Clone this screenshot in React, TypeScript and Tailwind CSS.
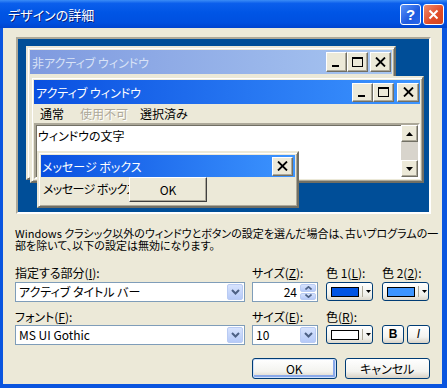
import React from "react";

// Classic 3D pieces used in the preview
const raised =
  "border border-t-white border-l-white border-r-[#716F64] border-b-[#716F64] shadow-[inset_-1px_-1px_0_#ACA899] bg-[#ECE9D8]";
const winFrame =
  "absolute flex flex-col bg-[#ECE9D8] p-[2px] border-2 border-t-[#ECE9D8] border-l-[#ECE9D8] border-r-[#716F64] border-b-[#716F64] shadow-[inset_1px_1px_0_#fff,inset_-1px_-1px_0_#ACA899]";
const activeBar = "bg-[linear-gradient(90deg,#0A50E0,#3D95FF)]";
const inactiveBar = "bg-[linear-gradient(90deg,#7F9ADF,#A8C6F1)]";

function Glyph({ kind }: { kind: "min" | "max" | "close" }) {
  if (kind === "min")
    return (
      <svg width="11" height="10" viewBox="0 0 11 10">
        <rect x="1" y="8" width="7" height="2" fill="#000" />
      </svg>
    );
  if (kind === "max")
    return (
      <svg width="11" height="10" viewBox="0 0 11 10">
        <rect x="0.5" y="0.5" width="10" height="9" fill="none" stroke="#000" />
        <rect x="0" y="0" width="11" height="2" fill="#000" />
      </svg>
    );
  return (
    <svg width="11" height="10" viewBox="0 0 11 10">
      <path d="M1 0.5 L10 9.5 M10 0.5 L1 9.5" stroke="#000" strokeWidth="1.8" />
    </svg>
  );
}

function CapBtn({ kind, className }: { kind: "min" | "max" | "close"; className: string }) {
  return (
    <div className={`flex items-center justify-center ${raised} ${className}`}>
      <Glyph kind={kind} />
    </div>
  );
}

function Chevron() {
  return (
    <svg width="9" height="6" viewBox="0 0 9 6">
      <path d="M1 1 L4.5 4.5 L8 1" stroke="#4D6185" strokeWidth="2" fill="none" />
    </svg>
  );
}

function ArrowBtn() {
  return (
    <div className="my-[1px] mr-[1px] w-[16px] flex items-center justify-center rounded-[2px] border border-[#B9CBF3] bg-[linear-gradient(180deg,#D7E3FD,#B6CAF8)]">
      <Chevron />
    </div>
  );
}

function Combo({ value, className }: { value: string; className: string }) {
  return (
    <div className={`flex h-[20px] border border-[#7F9DB9] bg-white ${className}`}>
      <span className="flex-1 pl-[3px] leading-[18px] whitespace-nowrap">{value}</span>
      <ArrowBtn />
    </div>
  );
}

function ColorBtn({ swatch }: { swatch: string }) {
  return (
    <div className="w-[47px] h-[19px] flex items-center rounded-[3px] border border-[#003C74] bg-[linear-gradient(180deg,#FFFFFF,#F0F0EA_70%,#DCD7CB)] pl-[4px]">
      <div className={`w-[28px] h-[10px] border border-black ${swatch}`} />
      <div className="ml-[3px] w-px h-[11px] bg-[#ACA899]" />
      <svg className="ml-[3px]" width="5" height="3" viewBox="0 0 5 3">
        <path d="M0 0 H5 L2.5 3 Z" fill="#000" />
      </svg>
    </div>
  );
}

function XpBtn({ children, className }: { children: React.ReactNode; className: string }) {
  return (
    <div
      className={`flex items-center justify-center rounded-[3px] border border-[#003C74] bg-[linear-gradient(180deg,#FFFFFF,#F3F3EF_65%,#D8D2C6)] ${className}`}
    >
      {children}
    </div>
  );
}

function U({ c }: { c: string }) {
  return <span className="underline underline-offset-[1px]">{c}</span>;
}

export default function App() {
  return (
    <div className="w-[447px] h-[388px] flex flex-col bg-[#0A55DF] text-[12px] leading-[13px] text-black font-['Noto_Sans_CJK_JP',sans-serif] [font-feature-settings:'palt']">
      {/* Title bar */}
      <div className="h-[28px] flex items-center pl-[8px] pr-[3px] bg-[linear-gradient(180deg,#3B8CF6_0%,#0B5FEC_12%,#0055E5_45%,#0050E0_80%,#0044CF_100%)]">
        <span className="text-white text-[13px] [text-shadow:1px_1px_0_#0A1E7A]">デザインの詳細</span>
        <div className="ml-auto flex gap-[2px]">
          <div className="w-[21px] h-[21px] flex items-center justify-center rounded-[3px] border border-white bg-[linear-gradient(135deg,#5A93F8,#1D5AE0_60%,#2A66EA)] text-white text-[15px] font-bold font-['Liberation_Sans',sans-serif]">
            ?
          </div>
          <div className="w-[21px] h-[21px] flex items-center justify-center rounded-[3px] border border-white bg-[linear-gradient(135deg,#F08C6E,#E04A27_60%,#D2461F)]">
            <svg width="11" height="11" viewBox="0 0 11 11">
              <path d="M1.5 1.5 L9.5 9.5 M9.5 1.5 L1.5 9.5" stroke="#fff" strokeWidth="2" />
            </svg>
          </div>
        </div>
      </div>

      {/* Client area */}
      <div className="flex-1 ml-[3px] mr-[5px] mb-[4px] bg-[#ECE9D8] px-[12px] pt-[9px] flex flex-col">
        {/* Preview */}
        <div className="relative ml-[1px] w-[415px] h-[177px] shrink-0 bg-[#004E98] border-2 border-t-[#ACA899] border-l-[#ACA899] border-r-white border-b-white">
          {/* Inactive window */}
          <div className={`${winFrame} left-[8px] top-[7px] w-[370px] h-[134px]`}>
            <div className={`h-[24px] flex items-center pl-[2px] pr-[1px] ${inactiveBar}`}>
              <span className="text-[#D8E2F6] whitespace-nowrap">非アクティブ ウィンドウ</span>
              <div className="ml-auto flex">
                <CapBtn kind="min" className="w-[21px] h-[20px]" />
                <CapBtn kind="max" className="w-[21px] h-[20px]" />
                <CapBtn kind="close" className="ml-[2px] w-[21px] h-[20px]" />
              </div>
            </div>
          </div>

          {/* Active window */}
          <div className={`${winFrame} left-[12px] top-[37px] w-[394px] h-[107px]`}>
            <div className={`h-[24px] shrink-0 flex items-center pl-[2px] pr-[1px] ${activeBar}`}>
              <span className="text-white whitespace-nowrap">アクティブ ウィンドウ</span>
              <div className="ml-auto flex">
                <CapBtn kind="min" className="w-[21px] h-[19px]" />
                <CapBtn kind="max" className="w-[21px] h-[19px]" />
                <CapBtn kind="close" className="ml-[3px] w-[22px] h-[19px]" />
              </div>
            </div>
            <div className="h-[19px] shrink-0 flex items-center pl-[6px] whitespace-nowrap">
              <span className="w-[40px]">通常</span>
              <span className="w-[60px] text-[#ACA899] [text-shadow:1px_1px_0_#fff]">使用不可</span>
              <span>選択済み</span>
            </div>
            <div className="h-[56px] shrink-0 flex bg-white border-2 border-t-[#ACA899] border-l-[#ACA899] border-r-white border-b-white shadow-[inset_1px_1px_0_#716F64]">
              <span className="flex-1 pl-[2px] pt-[4px]">ウィンドウの文字</span>
              <div className="w-[17px] flex flex-col">
                <div className={`h-[17px] flex items-center justify-center ${raised}`}>
                  <svg width="7" height="4" viewBox="0 0 7 4">
                    <path d="M0 4 H7 L3.5 0 Z" fill="#000" />
                  </svg>
                </div>
                <div className="flex-1 bg-[#D8D4CC]" />
                <div className={`h-[17px] flex items-center justify-center ${raised}`}>
                  <svg width="7" height="4" viewBox="0 0 7 4">
                    <path d="M0 0 H7 L3.5 4 Z" fill="#000" />
                  </svg>
                </div>
              </div>
            </div>
          </div>

          {/* Message box */}
          <div className={`${winFrame} left-[19px] top-[112px] w-[262px] h-[57px]`}>
            <div className={`h-[22px] shrink-0 flex items-center pl-[1px] pr-[2px] ${activeBar}`}>
              <span className="text-white whitespace-nowrap">メッセージ ボックス</span>
              <CapBtn kind="close" className="ml-auto w-[21px] h-[19px]" />
            </div>
            <div className="relative flex-1 flex pl-[2px] pt-[5px] overflow-hidden">
              <span className="w-[86px] overflow-hidden whitespace-nowrap tracking-[-0.6px]">メッセージ ボックスの文字</span>
              <div className="absolute left-[88px] top-0 w-[78px] h-[25px] flex items-center justify-center border border-t-white border-l-white border-r-[#404040] border-b-[#404040] shadow-[inset_-1px_-1px_0_#ACA899] bg-[#ECE9D8]">
                OK
              </div>
            </div>
          </div>
        </div>

        {/* Info */}
        <div className="mt-[13px] text-[11px] leading-[12px] whitespace-nowrap">
          <div>Windows クラシック以外のウィンドウとボタンの設定を選んだ場合は、古いプログラムの一</div>
          <div>部を除いて、以下の設定は無効になります。</div>
        </div>

        {/* Item row */}
        <div className="mt-[15px] flex">
          <div className="w-[230px] flex flex-col gap-[3px]">
            <span>
              指定する部分(<U c="I" />):
            </span>
            <Combo value="アクティブ タイトル バー" className="w-[230px]" />
          </div>
          <div className="ml-[7px] w-[66px] flex flex-col gap-[3px]">
            <span className="whitespace-nowrap">
              サイズ(<U c="Z" />):
            </span>
            <div className="flex h-[20px] border border-[#7F9DB9] bg-white">
              <span className="flex-1 text-right pr-[3px] leading-[18px]">24</span>
              <div className="my-[1px] mr-[1px] w-[16px] flex flex-col gap-px">
                <div className="flex-1 flex items-center justify-center rounded-[2px] border border-[#B9CBF3] bg-[linear-gradient(180deg,#D7E3FD,#B6CAF8)]">
                  <svg width="7" height="4" viewBox="0 0 7 4">
                    <path d="M0.5 3.5 L3.5 0.8 L6.5 3.5" stroke="#4D6185" strokeWidth="1.6" fill="none" />
                  </svg>
                </div>
                <div className="flex-1 flex items-center justify-center rounded-[2px] border border-[#B9CBF3] bg-[linear-gradient(180deg,#D7E3FD,#B6CAF8)]">
                  <svg width="7" height="4" viewBox="0 0 7 4">
                    <path d="M0.5 0.5 L3.5 3.2 L6.5 0.5" stroke="#4D6185" strokeWidth="1.6" fill="none" />
                  </svg>
                </div>
              </div>
            </div>
          </div>
          <div className="ml-[8px] w-[47px] flex flex-col gap-[3px]">
            <span className="whitespace-nowrap">
              色 1(<U c="L" />):
            </span>
            <ColorBtn swatch="bg-[#0054E3]" />
          </div>
          <div className="ml-[9px] w-[47px] flex flex-col gap-[3px]">
            <span className="whitespace-nowrap">
              色 2(<U c="2" />):
            </span>
            <ColorBtn swatch="bg-[#3D95FF]" />
          </div>
        </div>

        {/* Font row */}
        <div className="mt-[8px] flex">
          <div className="w-[230px] flex flex-col gap-[2px]">
            <span>
              フォント(<U c="F" />):
            </span>
            <Combo value="MS UI Gothic" className="w-[230px]" />
          </div>
          <div className="ml-[7px] w-[66px] flex flex-col gap-[2px]">
            <span className="whitespace-nowrap">
              サイズ(<U c="E" />):
            </span>
            <Combo value="10" className="w-[66px]" />
          </div>
          <div className="ml-[8px] w-[47px] flex flex-col gap-[2px]">
            <span className="whitespace-nowrap">
              色(<U c="R" />):
            </span>
            <ColorBtn swatch="bg-white" />
          </div>
          <div className="ml-[9px] flex flex-col gap-[2px]">
            <span>&nbsp;</span>
            <div className="flex gap-[3px]">
              <XpBtn className="w-[22px] h-[19px] font-bold font-['Liberation_Sans',sans-serif]">B</XpBtn>
              <XpBtn className="w-[23px] h-[19px] italic font-['Liberation_Sans',sans-serif]">I</XpBtn>
            </div>
          </div>
        </div>

        {/* Buttons */}
        <div className="mt-[13px] flex">
          <XpBtn className="ml-[237px] w-[85px] h-[21px] shadow-[inset_0_0_0_1px_#CFE0FA,inset_-1px_-1px_0_2px_#8AA9EA]">OK</XpBtn>
          <XpBtn className="ml-[8px] w-[86px] h-[21px]">キャンセル</XpBtn>
        </div>
      </div>
    </div>
  );
}
